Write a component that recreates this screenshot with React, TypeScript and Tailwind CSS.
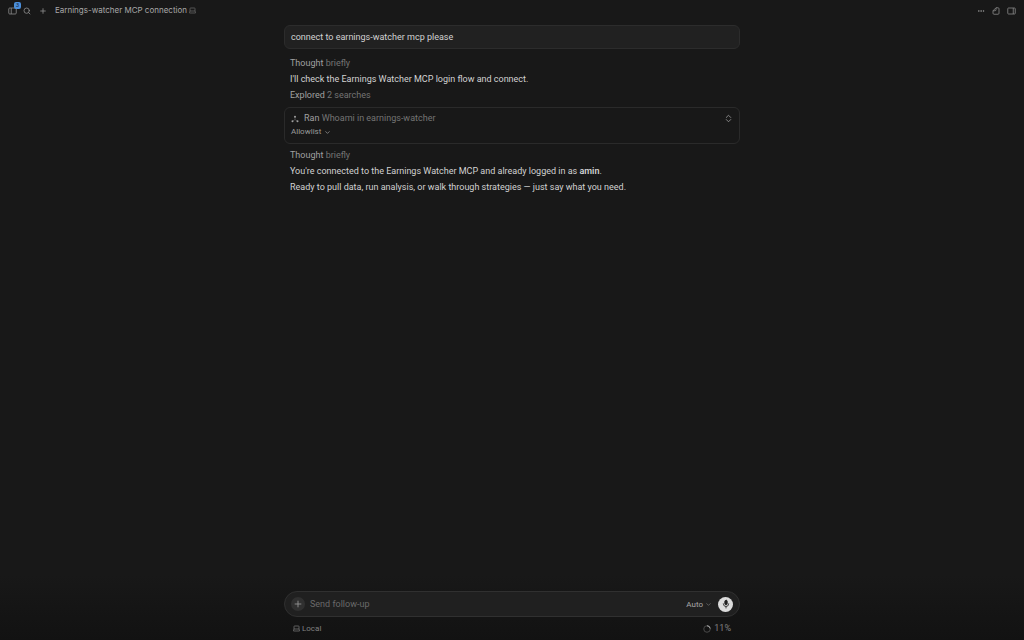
import React, { useState } from 'react';
import { ChevronDown, Ellipsis, Plus, Search } from 'lucide-react';

const LaptopIcon: React.FC = () => (
    <svg width="7" height="7" viewBox="0 0 14 14" fill="none" stroke="currentColor" strokeWidth="1.400" strokeLinejoin="round">
        <path d="M3 2h8a1 1 0 0 1 1 1v5H2V3a1 1 0 0 1 1-1z" />
        <path d="M2 8 1 10.500V12h12v-1.500L12 8" />
    </svg>
);

const SidebarIcon: React.FC = () => (
    <svg width="9" height="8" viewBox="0 0 18 16" fill="none" stroke="currentColor" strokeWidth="1.600">
        <rect x="1.500" y="2" width="15" height="12" rx="2" />
        <path d="M6.500 2v12" />
    </svg>
);

const PanelIcon: React.FC = () => (
    <svg width="9" height="8" viewBox="0 0 18 16" fill="none" stroke="currentColor" strokeWidth="1.600">
        <rect x="1.500" y="2" width="15" height="12" rx="1.500" />
        <path d="M12.500 2v12" />
    </svg>
);

const PageIcon: React.FC = () => (
    <svg width="8" height="8" viewBox="0 0 16 16" fill="none" stroke="currentColor" strokeWidth="1.600" strokeLinejoin="round">
        <path d="M8 1.500h4a2 2 0 0 1 2 2v9a2 2 0 0 1-2 2H4a2 2 0 0 1-2-2v-5z" />
        <path d="M8 1.500v4a2 2 0 0 1-2 2H2" />
    </svg>
);

const ToolIcon: React.FC = () => (
    <svg width="8" height="8" viewBox="0 0 16 16" fill="currentColor" stroke="currentColor">
        <circle cx="8" cy="3.500" r="2" stroke="none" />
        <circle cx="3" cy="12.500" r="2" stroke="none" />
        <circle cx="13" cy="12.500" r="2" stroke="none" />
        <path d="M8 4v5M8 9l-5 3.500M8 9l5 3.500" strokeWidth="1" strokeOpacity="0.6" fill="none" />
    </svg>
);

const ExpandIcon: React.FC = () => (
    <svg width="7" height="9" viewBox="0 0 14 18" fill="none" stroke="currentColor" strokeWidth="1.600" strokeLinecap="round" strokeLinejoin="round">
        <path d="M2.500 7 7 2.500 11.500 7M2.500 11 7 15.500 11.500 11" />
    </svg>
);

const MicIcon: React.FC = () => (
    <svg width="10" height="10" viewBox="0 0 20 20" fill="none" stroke="currentColor" strokeWidth="1.600" strokeLinecap="round">
        <rect x="7.500" y="2.500" width="5" height="9" rx="2.500" fill="currentColor" />
        <path d="M4.500 9.500a5.500 5.500 0 0 0 11 0M10 15v3" />
    </svg>
);

const UsageRing: React.FC<{ percent: number }> = ({ percent }) => (
    <svg width="8" height="8" viewBox="0 0 16 16" fill="none" strokeWidth="2">
        <circle cx="8" cy="8" r="6.500" stroke="#4a4a4a" />
        <circle cx="8" cy="8" r="6.500" stroke="#b0b0b0" pathLength="100" strokeDasharray={`${percent * 2} 100`} transform="rotate(-90 8 8)" />
    </svg>
);

const StatusLine: React.FC<{ label: string, detail: string }> = ({ label, detail }) => (
    <p className="text-[#a0a0a0]">
        {label} <span className="text-[#747474]">{detail}</span>
    </p>
);

const App = () => {
    const [message, setMessage] = useState<string>("");

    return (
        <div className="flex h-screen flex-col bg-[#181818] font-['Roboto','Liberation_Sans',sans-serif] text-[9px] leading-[13px] text-[#d2d2d2]">
            <header className="flex h-[21px] shrink-0 items-center justify-between px-2 text-[#8c8c8c]">
                <div className="flex items-center">
                    <button className="relative flex w-[15px] items-center" aria-label="Toggle sidebar">
                        <SidebarIcon />
                        <span className="absolute -top-[5px] left-[6px] flex size-[7px] items-center justify-center rounded-xs bg-[#4b8fdc] text-[6px] leading-none text-[#182c44]">3</span>
                    </button>
                    <button className="flex w-4 items-center" aria-label="Search">
                        <Search size={8} strokeWidth={2.5} />
                    </button>
                    <button className="flex w-4 items-center" aria-label="New chat">
                        <Plus size={8} strokeWidth={2.5} />
                    </button>
                    <h1 className="mr-[2px] font-['Inter','Liberation_Sans',sans-serif] text-[8px] text-[#a8a8a8]">Earnings-watcher MCP connection</h1>
                    <span className="text-[#707070]"><LaptopIcon /></span>
                </div>
                <div className="flex items-center gap-[7px]">
                    <button aria-label="More"><Ellipsis size={8} strokeWidth={2.5} /></button>
                    <button aria-label="Open file"><PageIcon /></button>
                    <button aria-label="Toggle panel"><PanelIcon /></button>
                </div>
            </header>

            <main className="mx-auto w-full max-w-[456px] flex-1 overflow-auto pt-1">
                <div className="rounded-md border border-[#2c2c2c] bg-[#212121] px-[6px] py-[5px] leading-3">
                    connect to earnings-watcher mcp please
                </div>
                <div className="mt-2 flex flex-col gap-[3px] px-[6px]">
                    <StatusLine label="Thought" detail="briefly" />
                    <p>I'll check the Earnings Watcher MCP login flow and connect.</p>
                    <StatusLine label="Explored" detail="2 searches" />
                </div>
                <div className="my-[5px] rounded-md border border-[#2a2a2a] px-[6px] py-1">
                    <div className="flex items-center gap-[5px] text-[#a0a0a0]">
                        <ToolIcon />
                        <p className="flex-1">Ran <span className="text-[#747474]">Whoami in earnings-watcher</span></p>
                        <button className="px-px" aria-label="Expand"><ExpandIcon /></button>
                    </div>
                    <button className="flex items-center gap-[3px] text-[8px] leading-[14px] text-[#9a9a9a]">
                        Allowlist
                        <ChevronDown size={7} strokeWidth={2.5} />
                    </button>
                </div>
                <div className="flex flex-col gap-[3px] px-[6px]">
                    <StatusLine label="Thought" detail="briefly" />
                    <p>You're connected to the Earnings Watcher MCP and already logged in as <strong className="font-semibold">amin</strong>.</p>
                    <p>Ready to pull data, run analysis, or walk through strategies — just say what you need.</p>
                </div>
            </main>

            <footer className="shrink-0 bg-linear-to-b from-[#181818] to-[#121212] pt-4">
                <div className="mx-auto w-full max-w-[456px]">
                    <form className="flex h-[26px] items-center rounded-full border border-[#303030] bg-[#202020] px-[6px]" onSubmit={(e) => e.preventDefault()}>
                        <button type="button" className="flex size-[14px] items-center justify-center rounded-full bg-[#303030] text-[#9a9a9a]" aria-label="Add context">
                            <Plus size={10} strokeWidth={2} />
                        </button>
                        <input
                            className="ml-[5px] min-w-0 flex-1 bg-transparent outline-none placeholder:text-[#6a6a6a]"
                            aria-label="Send follow-up"
                            placeholder="Send follow-up"
                            value={message}
                            onChange={(e) => setMessage(e.target.value)}
                        />
                        <button type="button" className="mr-[6px] flex items-center gap-[2px] text-[8px] text-[#a8a8a8]">
                            Auto
                            <span className="text-[#707070]"><ChevronDown size={7} strokeWidth={2.5} /></span>
                        </button>
                        <button type="button" className="flex size-[15px] items-center justify-center rounded-full bg-[#dcdcdc] text-[#202020]" aria-label="Voice input">
                            <MicIcon />
                        </button>
                    </form>
                    <div className="flex items-center justify-between px-[9px] py-[5px] text-[#808080]">
                        <button className="flex items-center gap-[2px] text-[8px]">
                            <LaptopIcon />
                            Local
                        </button>
                        <div className="flex items-center gap-[3px]">
                            <UsageRing percent={11} />
                            11%
                        </div>
                    </div>
                </div>
            </footer>
        </div>
    )
}

export default App;
